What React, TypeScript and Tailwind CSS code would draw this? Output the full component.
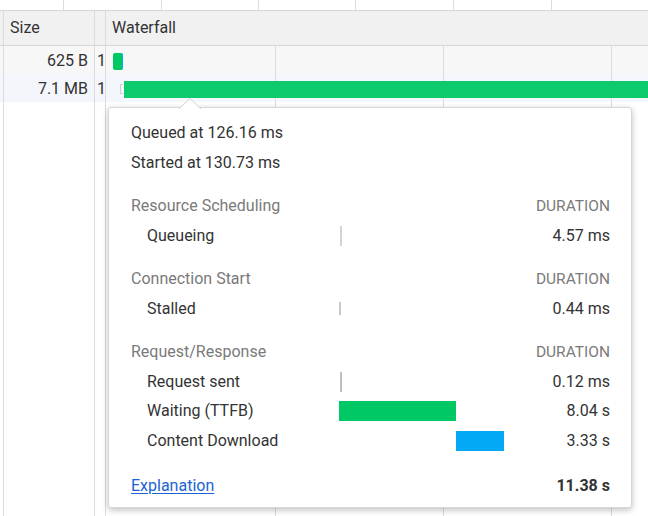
import React from "react";

const topCells = [64, 98, 97, 97, 98, 98];

const Row = ({
  bg,
  h,
  size,
  children,
}: {
  bg: string;
  h: string;
  size: string;
  children?: React.ReactNode;
}) => (
  <div className={`grid grid-cols-[4px_91px_11px_1fr] ${h} ${bg}`}>
    <div className="border-r border-[#dcdcdc]" />
    <div className="border-r border-[#dcdcdc] flex items-center justify-end pr-[6px] pt-[2px]">
      {size}
    </div>
    <div className="border-r border-[#dcdcdc] flex items-center pl-[2px] pt-[2px]">
      <span className="w-[6px] overflow-visible">1</span>
    </div>
    <div className="relative flex items-center pt-[2px]">{children}</div>
  </div>
);

const SectionHead = ({ title }: { title: string }) => (
  <div className="flex items-center h-[29.5px] mt-[14px]">
    <div className="flex-1 text-[#7a7a7a]">{title}</div>
    <div className="text-[15.5px] text-[#7a7a7a]">DURATION</div>
  </div>
);

const Item = ({
  label,
  value,
  bar,
}: {
  label: string;
  value: string;
  bar: React.ReactNode;
}) => (
  <div className="grid grid-cols-[208px_165px_1fr] items-center h-[29.5px]">
    <div className="pl-[16px]">{label}</div>
    <div className="relative h-full flex items-center">{bar}</div>
    <div className="text-right">{value}</div>
  </div>
);

export default function App() {
  return (
    <div className="w-[648px] h-[516px] relative overflow-hidden bg-white font-['Roboto',sans-serif] text-[16px] text-[#333]">
      {/* column strip from the table above */}
      <div className="h-[11px] flex border-b border-[#d6d6d6]">
        {topCells.map((w, i) => (
          <div key={i} style={{ width: w }} className="border-r border-[#dcdcdc]" />
        ))}
      </div>

      <div className="grid grid-cols-[4px_91px_11px_1fr] h-[35px] bg-[#f1f1f1] border-b border-[#d6d6d6]">
        <div className="border-r border-[#dcdcdc]" />
        <div className="border-r border-[#dcdcdc] flex items-center pl-[6px]">Size</div>
        <div className="border-r border-[#dcdcdc]" />
        <div className="flex items-center pl-[6px]">Waterfall</div>
      </div>

      <div className="relative flex flex-col h-[470px]">
        {/* waterfall grid lines */}
        <div className="absolute top-0 bottom-0 left-[275px] w-px bg-[#dcdcdc]" />
        <div className="absolute top-0 bottom-0 left-[443px] w-px bg-[#dcdcdc]" />
        <div className="absolute top-0 bottom-0 left-[611px] w-px bg-[#dcdcdc]" />

        <Row bg="bg-[#f3f3f3]/70" h="h-[28px]" size="625 B">
          <div className="ml-[7px] h-[17px] w-[10px] rounded-[2px] bg-[#00c864] border-r border-[#03a9f4] z-10" />
        </Row>
        <Row bg="bg-[#eef3fb]/70" h="h-[28px]" size="7.1 MB">
          <div className="ml-[14px] h-[10px] w-[3px] border border-[#cfcfcf] border-r-0" />
          <div className="ml-[1px] h-[17px] flex-1 bg-[#00c864]/95 z-10" />
        </Row>
        <div className="flex-1 grid grid-cols-[4px_91px_11px_1fr]">
          <div className="border-r border-[#dcdcdc]" />
          <div className="border-r border-[#dcdcdc]" />
          <div className="border-r border-[#dcdcdc]" />
          <div />
        </div>
      </div>

      {/* timing popover */}
      <div className="absolute left-[108px] top-[107px] w-[524px] h-[401px] z-30 bg-white rounded-[3px] border border-[#d8d8d8] shadow-[0_2px_6px_rgba(0,0,0,0.25)] pl-[22px] pr-[21px] pt-[10.5px]">
        <svg
          className="absolute left-[70px] -top-[10px]"
          width="22"
          height="11"
          viewBox="0 0 22 11"
        >
          <path d="M0 11 L11 0.5 L22 11 Z" fill="#fff" />
          <path d="M0 11 L11 0.5 L22 11" fill="none" stroke="#d0d0d0" strokeWidth="1" />
        </svg>

        <div className="flex items-center h-[29.5px]">Queued at 126.16 ms</div>
        <div className="flex items-center h-[29.5px]">Started at 130.73 ms</div>

        <SectionHead title="Resource Scheduling" />
        <Item
          label="Queueing"
          value="4.57 ms"
          bar={<div className="ml-px w-[2px] h-[20px] bg-[#d4d4d4]" />}
        />

        <SectionHead title="Connection Start" />
        <Item
          label="Stalled"
          value="0.44 ms"
          bar={<div className="w-[2px] h-[13px] bg-[#c8c8c8]" />}
        />

        <SectionHead title="Request/Response" />
        <Item
          label="Request sent"
          value="0.12 ms"
          bar={<div className="ml-px w-[1.5px] h-[20px] bg-[#b8c0c8]" />}
        />
        <Item
          label="Waiting (TTFB)"
          value="8.04 s"
          bar={<div className="w-[117px] h-[20px] bg-[#00c864]" />}
        />
        <Item
          label="Content Download"
          value="3.33 s"
          bar={<div className="ml-[117px] w-[48px] h-[20px] bg-[#03a9f4]" />}
        />

        <div className="flex items-center h-[29.5px] mt-[16px]">
          <a href="#" className="flex-1 text-[#1a63d4] underline underline-offset-2">
            Explanation
          </a>
          <div className="font-bold">11.38 s</div>
        </div>
      </div>
    </div>
  );
}
